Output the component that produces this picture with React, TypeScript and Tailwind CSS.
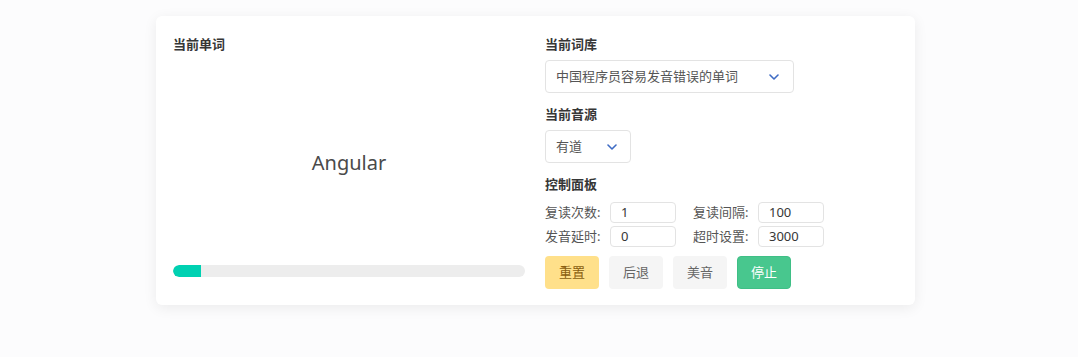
const cjk = { fontFamily: '"Noto Sans", "Noto Sans CJK SC", sans-serif' };

function Chevron() {
  return (
    <svg width="10" height="6" viewBox="0 0 10 6" className="shrink-0">
      <polyline points="1,1 5,5 9,1" fill="none" stroke="#3e6bc4" strokeWidth="1.6" strokeLinecap="round" strokeLinejoin="round" />
    </svg>
  );
}

function Field({ label, value }: { label: string; value: string }) {
  return (
    <div className="flex items-center">
      <span className="w-[65px] text-[13px] leading-[21px] text-[#555]">{label}</span>
      <div className="flex h-[21px] w-[66px] items-center rounded-[4px] border border-[#e3e3e3] bg-white pl-[10px] text-[13px] text-[#363636]">
        {value}
      </div>
    </div>
  );
}

export default function App() {
  return (
    <div className="min-h-[357px] bg-[#fcfcfd] pt-[16px]" style={cjk}>
      <div className="ml-[156px] w-[759px] rounded-[6px] bg-white px-[17px] pb-[16px] pt-[18px] shadow-[0_3px_14px_rgba(0,0,0,0.07)]">
        <div className="grid grid-cols-[352px_352px] gap-x-[20px]">
          {/* left: current word */}
          <div className="flex flex-col">
            <div className="text-[13px] font-bold leading-[20px] text-[#363636]">当前单词</div>
            <div className="flex flex-1 items-center justify-center pt-[6px]">
              <span className="text-[20px] leading-[30px] text-[#4a4a4a]">Angular</span>
            </div>
            <div className="mb-[12px] h-[12px] w-full overflow-hidden rounded-full bg-[#ededed]">
              <div className="h-full w-[28px] rounded-l-full bg-[#00d1b2]" />
            </div>
          </div>

          {/* right: settings */}
          <div className="flex flex-col">
            <div className="text-[13px] font-bold leading-[20px] text-[#363636]">当前词库</div>
            <div className="mt-[6px] flex h-[33px] w-[249px] items-center justify-between rounded-[4px] border border-[#e3e3e3] pl-[10px] pr-[14px] text-[13px] text-[#555]">
              <span>中国程序员容易发音错误的单词</span>
              <Chevron />
            </div>

            <div className="mt-[11px] text-[13px] font-bold leading-[20px] text-[#363636]">当前音源</div>
            <div className="mt-[6px] flex h-[33px] w-[86px] items-center justify-between rounded-[4px] border border-[#e3e3e3] pl-[10px] pr-[13px] text-[13px] text-[#555]">
              <span>有道</span>
              <Chevron />
            </div>

            <div className="mt-[11px] text-[13px] font-bold leading-[20px] text-[#363636]">控制面板</div>
            <div className="mt-[8px] grid grid-cols-[131px_131px] gap-x-[17px] gap-y-[3px]">
              <Field label="复读次数:" value="1" />
              <Field label="复读间隔:" value="100" />
              <Field label="发音延时:" value="0" />
              <Field label="超时设置:" value="3000" />
            </div>

            <div className="mt-[9px] flex gap-[10px] text-[13px]">
              <button className="h-[33px] w-[54px] rounded-[4px] bg-[#ffe08a] text-[#8a5e10]">重置</button>
              <button className="h-[33px] w-[54px] rounded-[4px] bg-[#f5f5f5] text-[#666]">后退</button>
              <button className="h-[33px] w-[54px] rounded-[4px] bg-[#f5f5f5] text-[#666]">美音</button>
              <button className="h-[33px] w-[54px] rounded-[4px] border border-[#3fbf86] bg-[#48c78e] text-white">停止</button>
            </div>
          </div>
        </div>
      </div>
    </div>
  );
}
